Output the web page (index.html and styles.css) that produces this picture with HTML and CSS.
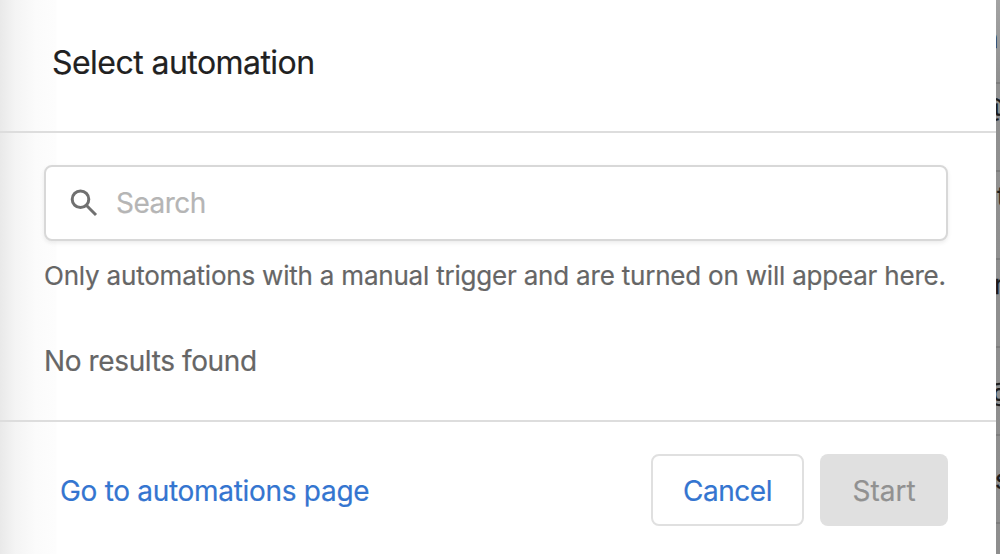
FILE: index.html
```
<!DOCTYPE html>
<html lang="en">
<head>
<meta charset="utf-8">
<title>Select automation</title>
<link rel="stylesheet" href="styles.css">
</head>
<body>
<div class="page">
  <main class="dialog">
    <header class="header"><h1 class="title">Select automation</h1></header>
    <section class="content">
      <div class="search">
        <svg class="icon" viewBox="0 0 28 28" fill="none" stroke="#707070" stroke-width="3"><circle cx="10.5" cy="10.2" r="8.3"/><path d="M16.3 16.3 26 26"/></svg>
        <span class="placeholder">Search</span>
      </div>
      <p class="hint">Only automations with a manual trigger and are turned on will appear here.</p>
      <p class="empty">No results found</p>
    </section>
    <footer class="footer">
      <a class="link">Go to automations page</a>
      <button class="button cancel">Cancel</button>
      <button class="button start">Start</button>
    </footer>
  </main>
  <aside class="behind">
    <div class="row first"><span class="edge i">n</span></div>
    <div class="row"><span class="edge at">@</span></div>
    <div class="row"><span class="edge t">t</span></div>
    <div class="row"><span class="edge r">r</span></div>
    <div class="row"><span class="edge at2">@</span></div>
    <div class="row"><span class="edge s">s</span></div>
    <div class="row"></div>
  </aside>
</div>
</body>
</html>
```
FILE: styles.css
```
* { box-sizing: border-box; }
body { margin: 0; font-family: Inter, sans-serif; overflow: hidden; }
.page { display: flex; width: 1000px; height: 554px; overflow: hidden; }
.dialog { width: 996px; flex: none; background: linear-gradient(to right, #e9e9e9, #f4f4f4 15px, #fbfbfb 36px, #fdfdfd 56px, #fff 57px); -webkit-text-stroke: 0.2px currentColor; }
.behind { width: 4px; height: 554px; flex: none; background: linear-gradient(#a3a3a3, #909090 80px, #8e8e8e); overflow: hidden; }
.row { height: 88px; border-bottom: 2px solid #7d7d7d; overflow: hidden; }
.row.first { height: 84px; }
.edge { display: block; font-size: 26px; line-height: 34px; color: #1a1a1a; width: 30px; -webkit-text-stroke: 0.3px currentColor; }
.i { margin: 22px 0 0 -13px; }
.at { margin: 6px 0 0 -16px; }
.t { margin: 8px 0 0 1px; }
.r { margin: 8px 0 0 -2px; }
.at2 { margin: 27px 0 0 -9px; }
.s { margin: 27px 0 0 -1px; }
.header { height: 133px; border-bottom: 2px solid #ddd; padding: 43px 52px 0; }
.title { margin: 0; font-size: 32px; line-height: 40px; font-weight: 400; letter-spacing: -0.55px; color: #212121; white-space: nowrap; }
.content { height: 289px; padding: 32px 48px 0 44px; border-bottom: 2px solid #ddd; }
.search { height: 76px; border: 2px solid #d8d8d8; border-radius: 8px; display: flex; align-items: center; padding-left: 24px; gap: 18px; background: #fff; box-shadow: 0 2px 4px rgba(0, 0, 0, 0.08); }
.icon { width: 28px; height: 28px; }
.placeholder { font-size: 28px; letter-spacing: -0.5px; color: #b5b5b5; }
.hint, .empty { margin: 0; line-height: 36px; color: #666; white-space: nowrap; }
.hint { margin-top: 17px; font-size: 26px; letter-spacing: -0.205px; }
.empty { margin-top: 49px; font-size: 28px; letter-spacing: -0.38px; }
.footer { height: 132px; display: flex; align-items: flex-start; padding: 32px 48px 0 60px; }
.link { font-size: 28px; line-height: 74px; letter-spacing: -0.3px; color: #3475d0; flex: 1; }
.button { height: 72px; border-radius: 8px; font: 28px Inter, sans-serif; padding: 2px 0 0; }
.cancel { width: 153px; border: 2px solid #e0e0e0; background: #fff; color: #3475d0; letter-spacing: -0.45px; }
.start { width: 128px; border: 0; background: #e0e0e0; color: #919191; margin-left: 16px; }
```
